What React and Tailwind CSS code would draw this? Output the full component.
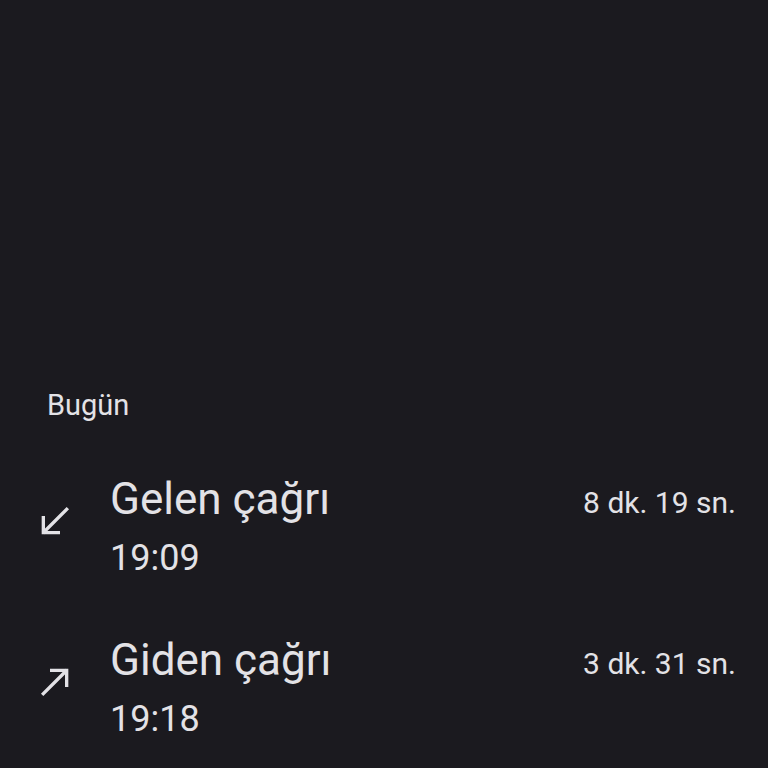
export default function App() {
    const calls = [
        { title: 'Gelen çağrı', time: '19:09', dur: '8 dk. 19 sn.', dir: 'in' },
        { title: 'Giden çağrı', time: '19:18', dur: '3 dk. 31 sn.', dir: 'out' },
    ]

    return (
        <div className="w-[768px] h-[768px] overflow-hidden bg-[#1b1a1f] text-[#e3e2e6]" style={{ fontFamily: 'Roboto, "Noto Sans", sans-serif' }}>
            <div className="pt-[387px] pl-[47px] text-[29px] leading-[36px]">Bugün</div>
            <div className="flex flex-col gap-[49px] mt-[48px]">
                {calls.map((c) => (
                    <div key={c.time} className="flex items-center pr-[32px]">
                        <div className="w-[110px] flex justify-start pl-[35px] mb-[13px]">
                            <svg width="40" height="40" viewBox="0 0 24 24" fill="none" stroke="#e3e2e6" strokeWidth="2" strokeLinecap="square">
                                {c.dir === 'in' ? (
                                    <>
                                        <path d="M19 5L5.5 18.5" />
                                        <path d="M5 10v9h9" />
                                    </>
                                ) : (
                                    <>
                                        <path d="M5 19L18.5 5.5" />
                                        <path d="M10 5h9v9" />
                                    </>
                                )}
                            </svg>
                        </div>
                        <div className="flex-1 flex flex-col">
                            <div className="text-[44px] leading-[56px]">{c.title}</div>
                            <div className="text-[36px] leading-[50px] mt-[6px]">{c.time}</div>
                        </div>
                        <div className="self-start mt-[12px] text-[30px] leading-[40px]">{c.dur}</div>
                    </div>
                ))}
            </div>
        </div>
    )
}
